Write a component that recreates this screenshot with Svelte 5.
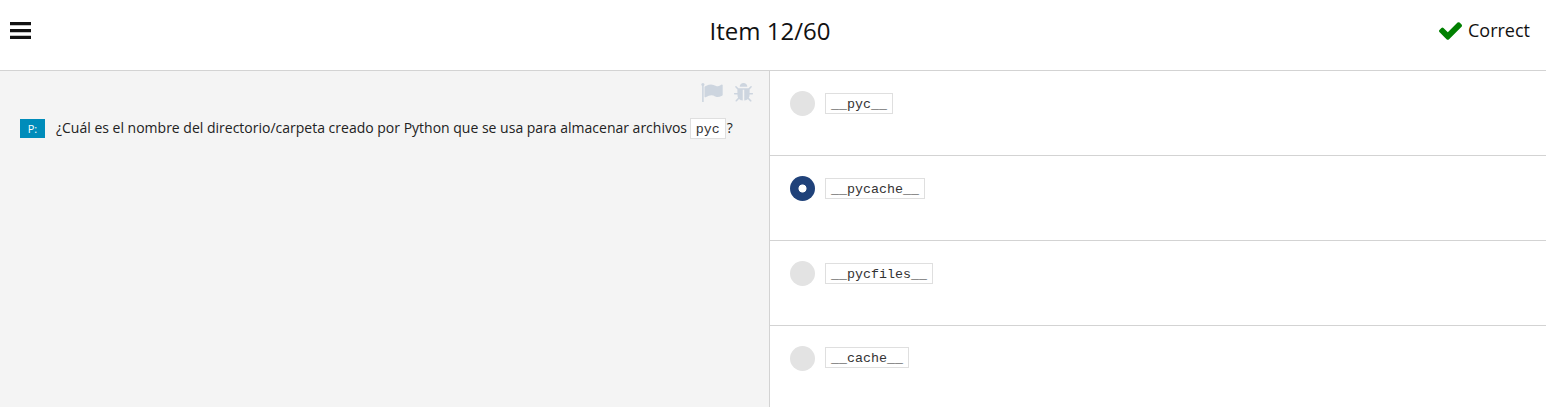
<script>
  const options = [
    { text: '__pyc__', selected: false },
    { text: '__pycache__', selected: true },
    { text: '__pycfiles__', selected: false },
    { text: '__cache__', selected: false },
  ];
</script>

<div class="page">
  <header>
    <svg class="menu" viewBox="0 0 21 18" aria-hidden="true">
      <path d="M0 0h21v3.2H0zM0 7h21v3.2H0zM0 13.8h21v3.2H0z" fill="#111" />
    </svg>
    <h1>Item 12/60</h1>
    <div class="result">
      <svg viewBox="121 334 1550 1188" aria-hidden="true">
        <path fill="#008000" d="M1671 566q0 40-28 68l-724 724-136 136q-28 28-68 28t-68-28l-136-136-362-362q-28-28-28-68t28-68l136-136q28-28 68-28t68 28l294 295 656-657q28-28 68-28t68 28l136 136q28 28 28 68z" />
      </svg>
      <span>Correct</span>
    </div>
  </header>
  <main>
    <section class="question">
      <div class="tools">
        <svg class="flag" viewBox="64 128 1728 1536" aria-hidden="true">
          <path d="M320 256q0 72-64 110v1266q0 13-9.500 22.500t-22.500 9.500h-64q-13 0-22.500-9.500t-9.500-22.500v-1266q-64-38-64-110 0-53 37.500-90.500t90.500-37.500 90.500 37.500 37.500 90.500zm1472 64v763q0 25-12.500 38.500t-39.500 27.500q-215 116-369 116-61 0-123.500-22t-108.500-48-115.500-48-142.500-22q-192 0-464 146-17 9-33 9-26 0-45-19t-19-45v-742q0-32 31-55 21-14 79-43 236-120 421-120 107 0 200 29t219 88q38 19 88 19 54 0 117.500-21t110-47 88-47 54.500-21q26 0 45 19t19 45z" />
        </svg>
        <svg class="bug" viewBox="96 64 1600 1600" aria-hidden="true">
          <path d="M1696 960q0 26-19 45t-45 19h-224q0 171-67 290l208 209q19 19 19 45t-19 45q-18 19-45 19t-45-19l-198-197q-5 5-15 13t-42 28.500-65 36.500-82 29-97 13v-896h-128v896q-51 0-101.500-13.500t-87-33-66-39-43.500-32.500l-15-14-183 207q-20 21-48 21-24 0-43-16-19-18-20.500-44.500t15.500-46.500l202-227q-58-114-58-274h-224q-26 0-45-19t-19-45 19-45 45-19h224v-294l-173-173q-19-19-19-45t19-45 45-19 45 19l173 173h844l173-173q19-19 45-19t45 19 19 45-19 45l-173 173v294h224q26 0 45 19t19 45zm-480-576h-640q0-133 93.500-226.500t226.500-93.500 226.500 93.500 93.500 226.500z" />
        </svg>
      </div>
      <div class="prompt">
        <span class="tag">P:</span>
        <p>¿Cuál es el nombre del directorio/carpeta creado por Python que se usa para almacenar archivos <code>pyc</code>?</p>
      </div>
    </section>
    <section class="answers">
      {#each options as option}
        <div class="row">
          <span class="radio" class:selected={option.selected}></span>
          <code>{option.text}</code>
        </div>
      {/each}
    </section>
  </main>
</div>

<style>
  .page {
    height: 407px;
    overflow: hidden;
    display: flex;
    flex-direction: column;
    background: #fff;
    color: #111;
    font-family: "Open Sans", sans-serif;
  }
  header {
    box-sizing: border-box;
    height: 71px;
    flex: none;
    display: grid;
    grid-template-columns: 1fr auto 1fr;
    align-items: center;
    padding: 0 16px 9px 10px;
    border-bottom: 1px solid #d3d3d3;
  }
  .menu {
    width: 21px;
    height: 18px;
  }
  h1 {
    margin: 0;
    font-size: 24px;
    line-height: 32px;
    font-weight: 400;
  }
  .result {
    display: flex;
    align-items: center;
    justify-content: flex-end;
    gap: 6px;
    font-size: 18px;
    line-height: 24px;
  }
  .result svg {
    width: 23px;
    height: 18px;
  }
  .result span {
    margin-bottom: 2px;
  }
  main {
    flex: 1;
    display: grid;
    grid-template-columns: 770px 1fr;
  }
  .question {
    background: #f4f4f4;
    border-right: 1px solid #d3d3d3;
  }
  .tools {
    display: flex;
    justify-content: flex-end;
    align-items: center;
    gap: 11px;
    padding: 11px 16px 0 0;
    height: 20px;
    fill: #cdd5df;
  }
  .flag {
    width: 22px;
    height: 19px;
  }
  .bug {
    width: 19px;
    height: 19px;
  }
  .prompt {
    display: flex;
    align-items: center;
    gap: 11px;
    padding: 14px 0 0 20px;
    color: #222;
    font-size: 14px;
    line-height: 24px;
    white-space: nowrap;
  }
  .tag {
    width: 25px;
    height: 19px;
    background: #008cba;
    color: #fff;
    font-size: 11px;
    line-height: 19px;
    text-align: center;
  }
  p {
    height: 24px;
    margin: 0;
  }
  code {
    box-sizing: border-box;
    display: inline-block;
    height: 21px;
    padding: 1px 5px;
    border: 1px solid #dfdfdf;
    background: #fff;
    color: #333;
    font-family: "Courier New", "Liberation Mono", monospace;
    font-size: 13.33px;
    line-height: 19px;
  }
  p code {
    margin: -2px 0 -2px -1px;
    vertical-align: 0;
    line-height: 19px;
    margin-right: 1px;
  }
  .row {
    box-sizing: border-box;
    height: 85px;
    display: flex;
    align-items: flex-start;
    gap: 10px;
    padding: 20px 0 0 20px;
    border-bottom: 1px solid #d3d3d3;
  }
  .row:last-child {
    height: 81px;
    border-bottom: 0;
  }
  .row code {
    margin-top: 2px;
  }
  .row:last-child code {
    margin-top: 1px;
  }
  .radio {
    width: 25px;
    height: 25px;
    border-radius: 50%;
    background: #e3e3e3;
  }
  .selected {
    background: radial-gradient(circle, #fff 3.6px, #20427a 4.4px);
  }
</style>
